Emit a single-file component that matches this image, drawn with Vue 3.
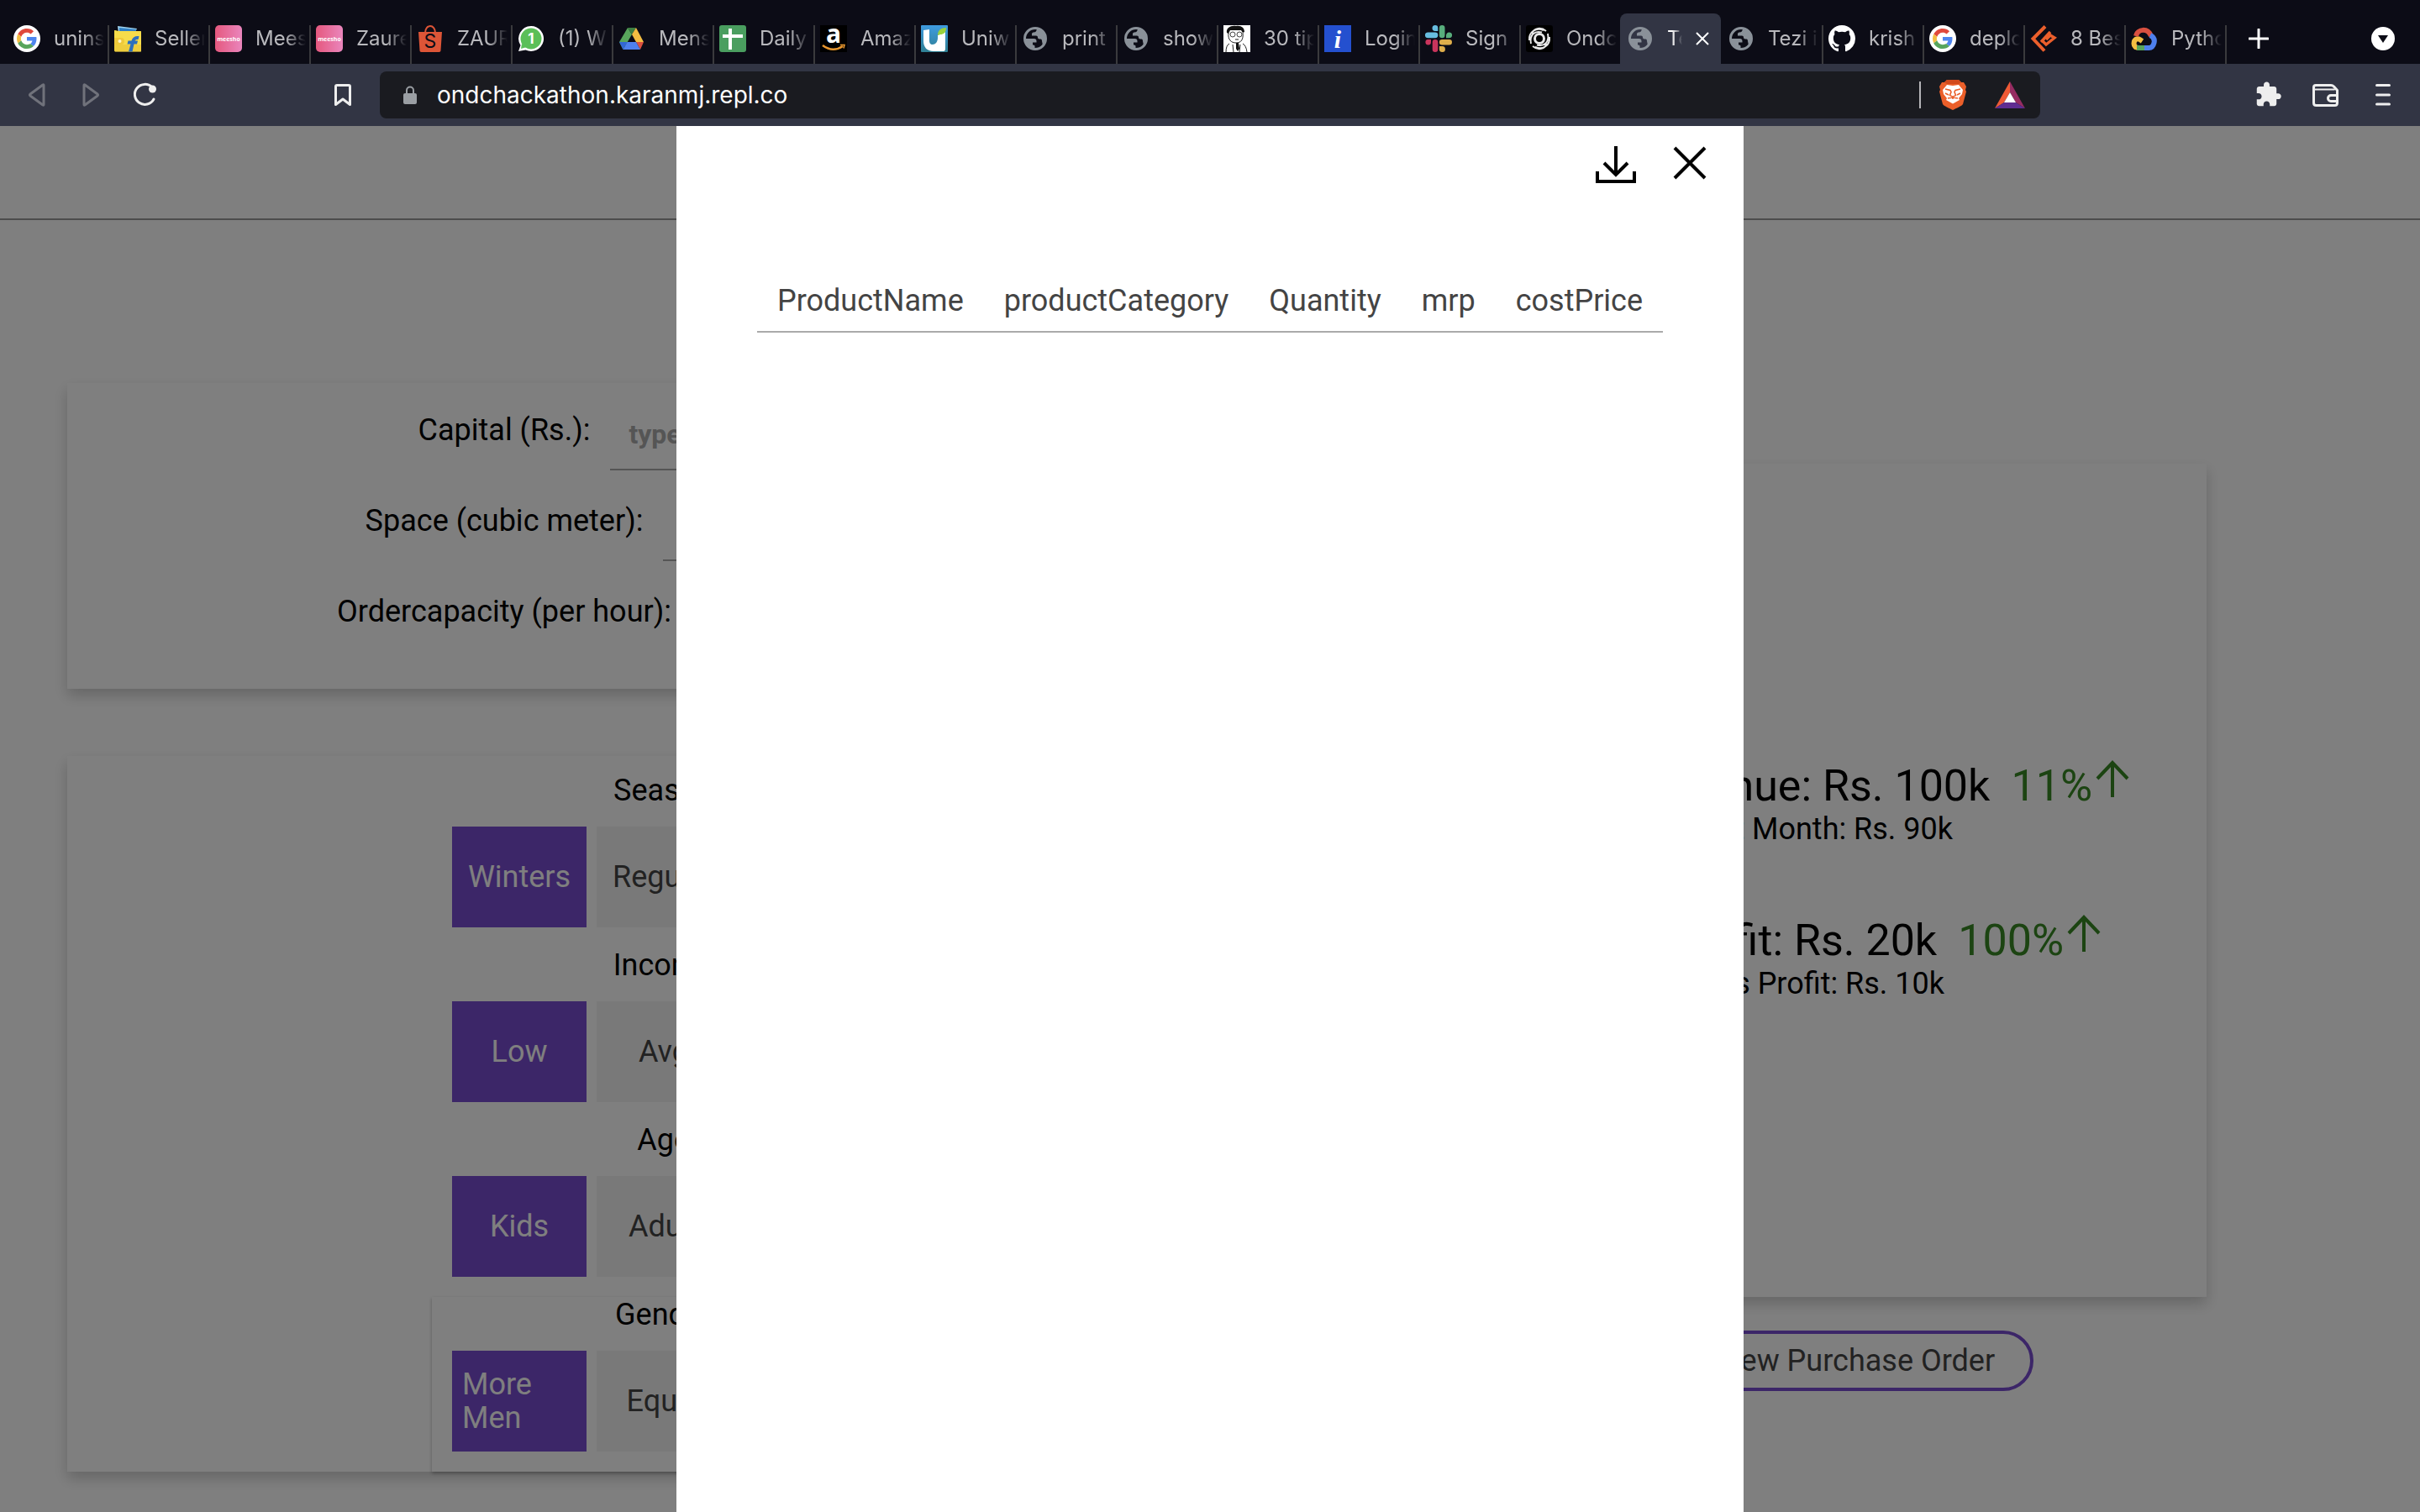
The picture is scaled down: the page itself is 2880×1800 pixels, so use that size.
<script setup>
import { ref } from 'vue'

const tabs = [
  { icon: 'google', title: 'unins' },
  { icon: 'flipkart', title: 'Seller' },
  { icon: 'meesho', title: 'Mees' },
  { icon: 'meesho', title: 'Zaure' },
  { icon: 'shopee', title: 'ZAUR' },
  { icon: 'whatsapp', title: '(1) W' },
  { icon: 'drive', title: 'Mens' },
  { icon: 'sheet', title: 'Daily' },
  { icon: 'amazon', title: 'Amaz' },
  { icon: 'uniware', title: 'Uniw' },
  { icon: 'globe', title: 'print' },
  { icon: 'globe', title: 'show' },
  { icon: 'portrait', title: '30 tip' },
  { icon: 'info', title: 'Login' },
  { icon: 'slack', title: 'Sign' },
  { icon: 'swirl', title: 'Ondc' },
  { icon: 'globe', title: 'Te', active: true },
  { icon: 'globe', title: 'Tezi i' },
  { icon: 'github', title: 'krish' },
  { icon: 'google', title: 'deplo' },
  { icon: 'gitbox', title: '8 Bes' },
  { icon: 'cloud', title: 'Pytho' },
]

const address = ref('ondchackathon.karanmj.repl.co')

const fields = [
  { id: 'capital', label: 'Capital (Rs.):', placeholder: 'type here' },
  { id: 'space', label: 'Space (cubic meter):', placeholder: 'type here' },
  { id: 'orders', label: 'Ordercapacity (per hour):', placeholder: 'type here' },
]

const groups = [
  { name: 'Season:', options: ['Winters', 'Regular', 'Summer'] },
  { name: 'Income:', options: ['Low', 'Avg', 'High'] },
  { name: 'Age:', options: ['Kids', 'Adult', 'Old'] },
  { name: 'Gender:', options: ['More Men', 'Equal', 'More Women'], raised: true },
]

const stats = [
  { id: 'revenue', text: 'Revenue: Rs. 100k', change: '11%', last: 'Last Month: Rs. 90k' },
  { id: 'profit', text: 'Profit: Rs. 20k', change: '100%', last: 'Last Months Profit: Rs. 10k' },
]

const columns = ['ProductName', 'productCategory', 'Quantity', 'mrp', 'costPrice']
</script>

<template>
  <div class="window">
    <nav class="tabs" aria-label="Tabs">
      <button v-for="(tab, i) in tabs" :key="i" class="tab" :class="{ active: tab.active, flush: tabs[i + 1]?.active }">
        <svg class="favicon" viewBox="0 0 32 32" aria-hidden="true">
          <g v-if="tab.icon === 'google'">
            <circle cx="16" cy="16" r="16" fill="#fff" />
            <g transform="translate(4 4) scale(.5)">
              <path fill="#e0493c" d="M24 9.5c3.54 0 6.71 1.22 9.21 3.6l6.85-6.85C35.9 2.38 30.47 0 24 0 14.62 0 6.51 5.38 2.56 13.22l7.98 6.19C12.43 13.72 17.74 9.5 24 9.5z" />
              <path fill="#4e85ee" d="M46.98 24.55c0-1.57-.15-3.09-.38-4.55H24v9.02h12.94c-.58 2.96-2.26 5.48-4.78 7.18l7.73 6c4.51-4.18 7.09-10.36 7.09-17.65z" />
              <path fill="#f3bd42" d="M10.53 28.59c-.48-1.45-.76-2.99-.76-4.59s.27-3.14.76-4.59l-7.98-6.19C.92 16.46 0 20.12 0 24c0 3.88.92 7.54 2.56 10.78l7.97-6.19z" />
              <path fill="#58a55c" d="M24 48c6.48 0 11.93-2.13 15.89-5.81l-7.73-6c-2.15 1.45-4.92 2.3-8.16 2.3-6.26 0-11.57-4.22-13.47-9.91l-7.98 6.19C6.51 42.62 14.62 48 24 48z" />
            </g>
          </g>
          <g v-else-if="tab.icon === 'flipkart'">
            <path fill="#9fd3f0" d="M4 1l23 3-2 4-20 1z" />
            <path fill="#2f7fc4" d="M6 3l20 2v3l-20 1z" />
            <path fill="#f6dc4a" d="M1 6l4 1h26c1 0 1 0 1 1v22c0 1 0 1.500-1 1.500H2c-1.500 0-2-.5-2-2V7c0-1 0-1 1-1z" />
            <path fill="#e6bd2f" d="M0 23h32v7c0 1-.5 1.500-1.500 1.500H2c-1.500 0-2-.5-2-2z" opacity=".5" />
            <path fill="#efc93a" d="M0 15h8a4 4 0 0 1 0 8H0z" />
            <circle cx="6.500" cy="19" r="2" fill="#fff6c8" />
            <path fill="#2c6fbe" d="M17 31.500l2.500-9h-4l1-4h4c1-4 4-6 9-5.500l-1 4c-2-.3-3.500.3-4 1.500h3.500l-1 4h-3.500l-2 9z" />
          </g>
          <g v-else-if="tab.icon === 'meesho'">
            <rect width="32" height="32" rx="5" fill="url(#meesho-fill)" />
            <text x="16" y="19" class="meesho-word">meesho</text>
          </g>
          <g v-else-if="tab.icon === 'shopee'">
            <path d="M10 9c0-5 3-8 6-8s6 3 6 8" fill="none" stroke="#dd5537" stroke-width="2" />
            <path fill="#dd5537" d="M2 8h28l-1.500 22c0 1-.7 2-2 2h-21c-1.300 0-2-1-2-2z" />
            <text x="16" y="27" class="glyph shopee-s">S</text>
          </g>
          <g v-else-if="tab.icon === 'whatsapp'">
            <path fill="#fff" d="M16 1a15 15 0 1 1-6.500 28.500L1 31l2.500-7A15 15 0 0 1 16 1z" />
            <circle cx="16" cy="16" r="12.500" fill="#5bbf58" />
            <path fill="#5bbf58" d="M5 22l-1 6 7-2z" />
            <text x="16" y="22" class="glyph badge">1</text>
          </g>
          <g v-else-if="tab.icon === 'drive'">
            <path fill="#58a55c" d="M11 3L1 20l4.500 9L16 11z" />
            <path fill="#3d7f42" d="M11 3h10l-5 8z" />
            <path fill="#f3bd42" d="M21 3l9 17h-9L16 11z" />
            <path fill="#d95040" d="M21 20h9l-4 9z" />
            <path fill="#4e80ee" d="M10.500 20H21l5 9H5.500z" />
            <path fill="#3267d6" d="M1 20h9.500l-5 9z" />
          </g>
          <g v-else-if="tab.icon === 'sheet'">
            <rect width="32" height="32" rx="3" fill="#4a9e5f" />
            <path stroke="#fff" stroke-width="4" d="M13 4v25M4 13h24" />
          </g>
          <g v-else-if="tab.icon === 'amazon'">
            <rect width="32" height="32" fill="#000" />
            <text x="16" y="21" class="glyph amazon-a">a</text>
            <path d="M3 24q12 9 24 1" fill="none" stroke="#e8962e" stroke-width="2.500" />
            <path d="M24 23.500h5l-1 4" fill="none" stroke="#e8962e" stroke-width="1.500" />
          </g>
          <g v-else-if="tab.icon === 'uniware'">
            <rect width="32" height="32" rx="1" fill="url(#uniware-fill)" />
            <path fill="#fff" d="M3 6l7-1v13c0 3 1 5 4 5s6-3 6-8v-3l9-4v20c0 2-1 3-2 3H15C7 31 3 26 3 19z" />
            <path fill="#9ad23c" d="M20 12c0-6 4-9 10-9 0 6-3 8-7 8z" />
          </g>
          <g v-else-if="tab.icon === 'globe'">
            <circle cx="16" cy="16" r="12.500" fill="none" stroke="#8a9199" stroke-width="3" />
            <path fill="#8a9199" d="M4 16h10.500c2 0 3 1 3 3v1.500h-4.500v3c1.500 0 2.500.5 2.500 1.500v4C9 29 3 23 4 16z" />
            <path fill="#8a9199" d="M18 4c-.3 3-1.500 4.500-4 4.500-1.500 0-2 1-2 2.500v1.500h5c1.300 0 2 .8 2 2s.8 2 2 2h1.500c1 0 1.500 1 1.500 2.500l1 5c3-3 4-6 3-10C27 8 23 4 18 4z" />
          </g>
          <g v-else-if="tab.icon === 'portrait'">
            <rect width="32" height="32" fill="#fff" />
            <path fill="#111" d="M4 9c-1-6 5-9 11-8 6-1 10 2 10 7l-2 1-2-3H8L6 10z" />
            <path d="M6 9c-1 8 3 12 9 12s9-4 8-12M7 22q-4 2-4 10M23 22q4 2 5 10M11 23l1 9M20 23l-1 9M14 17h4" fill="none" stroke="#222" />
            <circle cx="11" cy="11" r="3" fill="none" stroke="#444" />
            <circle cx="19" cy="11" r="3" fill="none" stroke="#444" />
            <path fill="#111" d="M15 21h3l1 7-2 3-2-3z" />
          </g>
          <g v-else-if="tab.icon === 'info'">
            <rect width="32" height="32" fill="#2450cf" />
            <text x="16" y="27" class="glyph info-i">i</text>
          </g>
          <g v-else-if="tab.icon === 'slack'">
            <path fill="#67bde0" d="M12 0a3.300 3.300 0 0 1 3.300 3.300V7H12a3.300 3.300 0 0 1 0-7zM3.300 8.500H12a3.300 3.300 0 0 1 0 6.700H3.300a3.300 3.300 0 0 1 0-6.700z" />
            <path fill="#58ae7c" d="M20.200 0a3.300 3.300 0 0 1 3.300 3.300V12a3.300 3.300 0 0 1-6.600 0V3.300A3.300 3.300 0 0 1 20.200 0zM28.700 8.500a3.300 3.300 0 0 1 0 6.700H25V12a3.500 3.500 0 0 1 3.700-3.500z" />
            <path fill="#dfae4b" d="M20.200 16.900h8.500a3.300 3.300 0 0 1 0 6.600h-8.500a3.300 3.300 0 0 1 0-6.600zM16.900 25h3.300a3.500 3.500 0 1 1-3.300 3.700z" />
            <path fill="#c9345c" d="M12 16.900a3.300 3.300 0 0 1 3.300 3.300v8.500a3.300 3.300 0 0 1-6.600 0v-8.500a3.300 3.300 0 0 1 3.300-3.300zM3.300 16.900H7v3.300a3.300 3.300 0 1 1-3.700-3.300z" />
          </g>
          <g v-else-if="tab.icon === 'swirl'">
            <rect width="32" height="32" rx="3" fill="#000" />
            <g fill="none" stroke="#e8e8e8" stroke-width="2">
              <circle cx="16" cy="16" r="5.500" stroke-width="3" />
              <path d="M4 18C3 8 12 2 21 6M6 22C4 12 10 6 19 8.500M28 14c1 10-8 16-17 12M26 10c2 10-4 16-13 13.500M8 25c6 5 14 4 17-3M24 7C18 2 10 3 7 10" />
            </g>
          </g>
          <path v-else-if="tab.icon === 'github'" transform="scale(2)" fill="#fff" d="M8 0C3.580 0 0 3.580 0 8c0 3.540 2.290 6.530 5.470 7.590.4.070.55-.17.55-.38 0-.19-.01-.82-.01-1.490-2.010.37-2.530-.49-2.690-.94-.09-.23-.48-.94-.82-1.130-.28-.15-.68-.52-.01-.53.63-.01 1.080.58 1.230.82.72 1.210 1.870.87 2.330.66.07-.52.28-.87.51-1.070-1.780-.2-3.640-.89-3.640-3.950 0-.87.31-1.590.82-2.150-.08-.2-.36-1.020.08-2.120 0 0 .67-.21 2.200.82.64-.18 1.320-.27 2-.27s1.360.09 2 .27c1.530-1.040 2.200-.82 2.200-.82.44 1.100.16 1.920.08 2.120.51.56.82 1.270.82 2.150 0 3.070-1.870 3.750-3.650 3.950.29.25.54.73.54 1.480 0 1.070-.01 1.930-.01 2.200 0 .21.15.46.55.38A8.010 8.010 0 0 0 16 8c0-4.420-3.580-8-8-8z" />
          <g v-else-if="tab.icon === 'gitbox'" fill="none" stroke="#ec5f2c" stroke-width="4">
            <path d="M18 1.500L3.500 16 17 30.500" />
            <path d="M13 20L24 8" stroke-width="3.500" />
            <path d="M14 18l5 5 10-8-5-3-5 5" stroke-width="3.500" />
          </g>
          <g v-else fill="none" stroke-width="6" stroke-linejoin="round">
            <path stroke="#f3bd42" d="M11 27H9c-3 0-5.500-2-5.500-5 0-5 4-7 7-5l3 2" />
            <path stroke="#d95040" d="M6 13c2-9 14-10 18 0" />
            <path stroke="#4e80ee" d="M23 12c4 2 5.500 5 4.500 9-1 4-3 6-6 6h-6" />
            <path stroke="#58a55c" d="M7 27h9" />
          </g>
        </svg>
        <span class="title">{{ tab.title }}</span>
        <svg v-if="tab.active" class="tab-close" viewBox="0 0 16 16" aria-hidden="true"><path d="M1 1l14 14M15 1L1 15" /></svg>
      </button>
      <button class="new-tab" aria-label="New tab">
        <svg viewBox="0 0 24 24"><path d="M12 1v22M1 12h22" /></svg>
      </button>
      <button class="tab-search" aria-label="Search tabs">
        <svg viewBox="0 0 28 28"><circle cx="14" cy="14" r="14" fill="#fff" /><path d="M8 10h12l-6 9z" fill="#0c0c16" /></svg>
      </button>
      <svg class="defs" aria-hidden="true">
        <linearGradient id="meesho-fill"><stop stop-color="#e5587e" /><stop offset="1" stop-color="#ea86bd" /></linearGradient>
        <linearGradient id="uniware-fill" x2="0" y2="1"><stop stop-color="#3f9be0" /><stop offset="1" stop-color="#2f7f93" /></linearGradient>
      </svg>
    </nav>

    <div class="toolbar">
      <button class="tool dim" aria-label="Back"><svg viewBox="0 0 40 40"><path d="M28 8.500v23q0 1-1 .5L12 21q-1-1 0-2L27 8q1-.5 1 .5z" /></svg></button>
      <button class="tool dim" aria-label="Forward"><svg viewBox="0 0 40 40"><path d="M12 8.500v23q0 1 1 .5l15-11q1-1 0-2L13 8q-1-.5-1 .5z" /></svg></button>
      <button class="tool" aria-label="Reload">
        <svg viewBox="0 0 40 40"><path d="M31 25a12 12 0 1 1-2-14" stroke-width="3" /><circle cx="29.500" cy="13" r="4.500" fill="#eee" stroke="none" /></svg>
      </button>
      <button class="tool bookmark" aria-label="Bookmark"><svg viewBox="0 0 40 40"><path d="M11.500 31.500V10q0-1.500 1.500-1.500h14q1.500 0 1.500 1.500v21.500L20 25z" stroke-width="3" /></svg></button>
      <div class="address">
        <svg class="lock" viewBox="0 0 16 22" aria-hidden="true"><rect y="9" width="16" height="13" rx="2" fill="#9a9ea3" /><path d="M4 10V5.500a4 4 0 0 1 8 0V10" fill="none" stroke="#9a9ea3" stroke-width="2" /></svg>
        <input v-model="address" aria-label="Address" spellcheck="false" />
        <span class="divider"></span>
        <button class="brave" aria-label="Shields">
          <svg viewBox="0 0 32 36">
            <path fill="#eb5f2a" d="M9 0h14l3 3 3 0 3 5-1 4 1 2-4 15c-1 2-8 5-12 7-4-2-11-5-12-7L0 14l1-2-1-4 3-5 3 0z" />
            <path fill="#d24a1c" d="M9 0h14l3 3-3 2H9L6 3z" />
            <path fill="#fff" d="M9 6l7 1 7-1 5 6-1 5-4 5 1 2-8 4.500L8 24l1-2-4-5-1-5z" />
            <path fill="none" stroke="#eb5f2a" stroke-width="1.600" d="M7 11l6 1.500 1 2-1.500 4 3.500 2 3.500-2-1.500-4 1-2L25 11M16 20v3M10 22l6-1 6 1M7 16l4 2M25 16l-4 2" />
          </svg>
        </button>
        <button class="bat" aria-label="Rewards">
          <svg viewBox="0 0 36 32"><path fill="#ee5a35" d="M18 0v13l-7 12L0 32z" /><path fill="#962c62" d="M18 0l18 32-11-7-7-12z" /><path fill="#5f2d91" d="M0 32l11-7h14l11 7z" /><path fill="#fff" d="M18 13l7 12H11z" /></svg>
        </button>
      </div>
      <div class="tools">
        <button class="tool" aria-label="Extensions">
          <svg viewBox="0 0 40 40"><path transform="translate(3 3) scale(1.380)" fill="#eee" stroke="none" d="M20.500 11H19V7c0-1.100-.9-2-2-2h-4V3.500C13 2.120 11.880 1 10.500 1S8 2.120 8 3.500V5H4c-1.100 0-1.990.9-1.990 2v3.800H3.500c1.490 0 2.700 1.210 2.700 2.700s-1.210 2.700-2.700 2.700H2V20c0 1.100.9 2 2 2h3.800v-1.500c0-1.490 1.210-2.700 2.700-2.700 1.490 0 2.700 1.210 2.700 2.700V22H17c1.100 0 2-.9 2-2v-4h1.500c1.380 0 2.500-1.120 2.500-2.500S21.880 11 20.500 11z" /></svg>
        </button>
        <button class="tool" aria-label="Wallet">
          <svg viewBox="0 0 40 40"><path stroke-width="3" d="M5.500 11q0-2.500 2.500-2.500h18q2 0 3.500 1.500l4 4.500v15q0 3-3 3h-22q-3 0-3-3zM33 20.500h-7a3.500 3.500 0 0 0 0 7h7" /><path d="M6 13.500h24" /></svg>
        </button>
        <button class="tool" aria-label="Menu"><svg viewBox="0 0 40 40"><path d="M12.500 8.500h15M12.500 20h15M12.500 31h15" stroke-width="3" /></svg></button>
      </div>
    </div>

    <div class="viewport">
      <header class="site-header"></header>
      <main class="content">
        <div class="inputs">
          <form class="card fields" @submit.prevent>
            <div v-for="f in fields" :key="f.id" class="field">
              <label :for="f.id">{{ f.label }}</label>
              <input :id="f.id" :placeholder="f.placeholder" />
            </div>
          </form>
          <section class="card choices">
            <div v-for="g in groups" :key="g.name" class="group" :class="{ raised: g.raised }">
              <h2>{{ g.name }}</h2>
              <div class="options">
                <button v-for="(o, i) in g.options" :key="o" :class="{ chosen: i === 0 }">{{ o }}</button>
              </div>
            </div>
          </section>
        </div>
        <aside class="results">
          <section class="card stats">
            <div v-for="s in stats" :key="s.id" class="stat" :class="s.id">
              <p class="figure">
                {{ s.text }}
                <span class="change">{{ s.change }}<svg viewBox="0 0 40 44" aria-hidden="true"><path d="M20 44V4M2 22L20 3l18 19" /></svg></span>
              </p>
              <p class="last">{{ s.last }}</p>
            </div>
          </section>
          <button class="order">View Purchase Order</button>
        </aside>
      </main>

      <div class="overlay">
        <section class="modal" role="dialog" aria-label="Purchase order">
          <div class="actions">
            <button aria-label="Download"><svg viewBox="0 0 24 24"><path d="M1 17v6h22v-6M12 2v17M5 12l7 7 7-7" /></svg></button>
            <button aria-label="Close"><svg viewBox="0 0 24 24"><path d="M3 3l18 18M3 21L21 3" /></svg></button>
          </div>
          <table>
            <thead>
              <tr><th v-for="c in columns" :key="c" scope="col">{{ c }}</th></tr>
            </thead>
          </table>
        </section>
      </div>
    </div>
  </div>
</template>

<style>
body {
  margin: 0;
  background: #fff;
}
</style>

<style scoped>
* {
  box-sizing: border-box;
}
.window {
  display: flex;
  flex-direction: column;
  height: 100vh;
  overflow: hidden;
  font-family: Roboto, sans-serif;
  font-size: 36px;
  line-height: 42px;
}
button {
  padding: 0;
  border: 0;
  background: none;
  color: inherit;
  font: inherit;
}
svg {
  display: block;
}
h2,
p {
  margin: 0;
  font-size: inherit;
  font-weight: 400;
}

.tabs {
  display: flex;
  height: 76px;
  padding: 16px 30px 0 8px;
  background: #0c0c16;
  color: #b9b9bd;
  font-family: Inter, sans-serif;
  font-size: 24px;
  line-height: 32px;
}
.tab {
  position: relative;
  display: flex;
  flex: 0 1 120px;
  align-items: center;
  gap: 16px;
  min-width: 0;
  padding: 0 4px 0 8px;
}
.tab::after {
  content: '';
  position: absolute;
  right: -2px;
  bottom: 0;
  width: 2px;
  height: 46px;
  background: #3a3a3d;
}
.tab.active {
  border-radius: 8px 8px 0 0;
  background: #323544;
  color: #fff;
}
.tab.active::after,
.tab.flush::after {
  display: none;
}
.favicon {
  flex: none;
  width: 32px;
  height: 32px;
}
.title {
  flex: 1;
  min-width: 0;
  overflow: hidden;
  text-align: left;
  white-space: nowrap;
  mask-image: linear-gradient(to left, transparent, #000 24px);
}
.active .title {
  mask-image: linear-gradient(to left, transparent, #000 12px);
}
.tab-close {
  flex: none;
  width: 16px;
  height: 16px;
  margin-right: 10px;
  fill: none;
  stroke: #fff;
  stroke-width: 2;
}
.new-tab {
  flex: none;
  width: 24px;
  margin-left: 28px;
}
.new-tab svg {
  width: 24px;
  height: 24px;
  stroke: #fff;
  stroke-width: 3;
  stroke-linecap: round;
}
.tab-search {
  flex: none;
  width: 28px;
  margin-left: auto;
}
.tab-search svg {
  width: 28px;
  height: 28px;
}
.defs {
  position: absolute;
  width: 0;
  height: 0;
}
.glyph {
  fill: #fff;
  text-anchor: middle;
  font-family: Inter, sans-serif;
}
.meesho-word {
  fill: #fff;
  text-anchor: middle;
  font: 700 7px 'Open Sans', sans-serif;
}
.shopee-s {
  fill: #0c0c16;
  font-size: 23px;
}
.badge {
  font-size: 17px;
  font-weight: 700;
}
.amazon-a {
  font: 700 30px 'Open Sans', sans-serif;
}
.info-i {
  font: italic 700 30px 'Liberation Serif', serif;
}

.toolbar {
  display: flex;
  align-items: center;
  gap: 24px;
  height: 74px;
  padding: 0 24px;
  background: #323544;
}
.tool {
  flex: none;
  width: 40px;
  height: 40px;
}
.tool svg {
  fill: none;
  stroke: #eee;
  stroke-width: 2;
  stroke-linecap: round;
  stroke-linejoin: round;
}
.tool.dim svg {
  stroke: #70727b;
  stroke-width: 3;
}
.bookmark {
  margin-left: 172px;
}
.address {
  display: flex;
  flex: 1;
  align-items: center;
  height: 56px;
  margin-right: 228px;
  padding: 0 18px 0 28px;
  border-radius: 8px;
  background: #1a1b20;
}
.lock {
  flex: none;
  width: 16px;
  height: 22px;
  margin-right: 24px;
}
.address input {
  flex: 1;
  min-width: 0;
  padding: 0;
  border: 0;
  outline: 0;
  background: none;
  color: #fff;
  font: 28px/40px Inter, sans-serif;
}
.divider {
  width: 2px;
  height: 32px;
  margin-right: 22px;
  background: #b5b5b8;
}
.brave {
  width: 32px;
  margin-right: 34px;
}
.bat {
  width: 36px;
}
.tools {
  display: flex;
  gap: 28px;
}

.viewport {
  position: relative;
  flex: 1;
  min-height: 0;
  overflow: hidden;
}
.site-header {
  height: 112px;
  border-bottom: 2px solid #999;
}
.content {
  display: grid;
  grid-template-columns: 1428fr 838fr;
  gap: 280px;
  align-items: center;
  padding: 194px 254px 48px 80px;
}
.card {
  background: #fff;
  box-shadow: 0 8px 16px rgba(0, 0, 0, 0.2);
}
.inputs {
  display: grid;
  gap: 80px;
}
.fields {
  display: grid;
  gap: 12px;
  padding: 8px 0 44px;
}
.field {
  display: flex;
  align-items: center;
  justify-content: center;
  gap: 24px;
}
.field input {
  width: 364px;
  height: 96px;
  padding: 16px 22px 4px;
  border: 0;
  border-bottom: 2px solid #aaa;
  background: none;
  font: 700 32px/40px Roboto, sans-serif;
}
.field input::placeholder {
  color: #aaa;
}
.choices {
  display: flex;
  flex-direction: column;
  align-items: center;
  padding-top: 20px;
}
.group {
  padding: 0 24px 24px;
}
.group.raised {
  box-shadow: 0 2px 4px rgba(0, 0, 0, 0.3);
}
.group h2 {
  margin-bottom: 22px;
  text-align: center;
}
.options {
  display: grid;
  grid-template-columns: 160px 160px 168px;
  gap: 12px;
}
.options button {
  display: flex;
  align-items: center;
  justify-content: center;
  height: 120px;
  padding: 0 12px;
  background: #f2f2f2;
  color: #444;
  line-height: 40px;
  text-align: left;
}
.options .chosen {
  background: #784cd0;
  color: #fff;
}

.results {
  display: flex;
  flex-direction: column;
  align-items: center;
  gap: 40px;
}
.stats {
  display: flex;
  flex-direction: column;
  justify-content: center;
  gap: 81px;
  width: 100%;
  min-height: 992px;
}
.stat {
  display: flex;
  flex-direction: column;
  align-items: flex-end;
  white-space: nowrap;
}
.revenue {
  padding-right: 92px;
}
.revenue .last {
  padding-right: 210px;
}
.profit {
  padding-right: 126px;
}
.profit .last {
  padding-right: 186px;
}
.figure {
  display: flex;
  gap: 25px;
  font-size: 52px;
  line-height: 61px;
}
.change {
  display: flex;
  gap: 4px;
  color: #388824;
}
.change svg {
  width: 40px;
  height: 44px;
  fill: none;
  stroke: #388824;
  stroke-width: 4;
}
.order {
  height: 72px;
  padding: 0 42px;
  border: 4px solid #784cd0;
  border-radius: 36px;
  color: #444;
}

.overlay {
  position: absolute;
  inset: 0;
  display: flex;
  justify-content: center;
  background: rgba(0, 0, 0, 0.5);
}
.modal {
  padding: 20px 40px;
  background: #fff;
}
.actions {
  display: flex;
  justify-content: flex-end;
  gap: 40px;
}
.actions svg {
  width: 48px;
  height: 48px;
  fill: none;
  stroke: #000;
  stroke-width: 2;
}
table {
  margin: 103px 56px 0;
  border-collapse: collapse;
}
th {
  padding: 16px 24px 15px;
  border-bottom: 2px solid #aaa;
  color: #444;
  font-weight: 400;
}
</style>
